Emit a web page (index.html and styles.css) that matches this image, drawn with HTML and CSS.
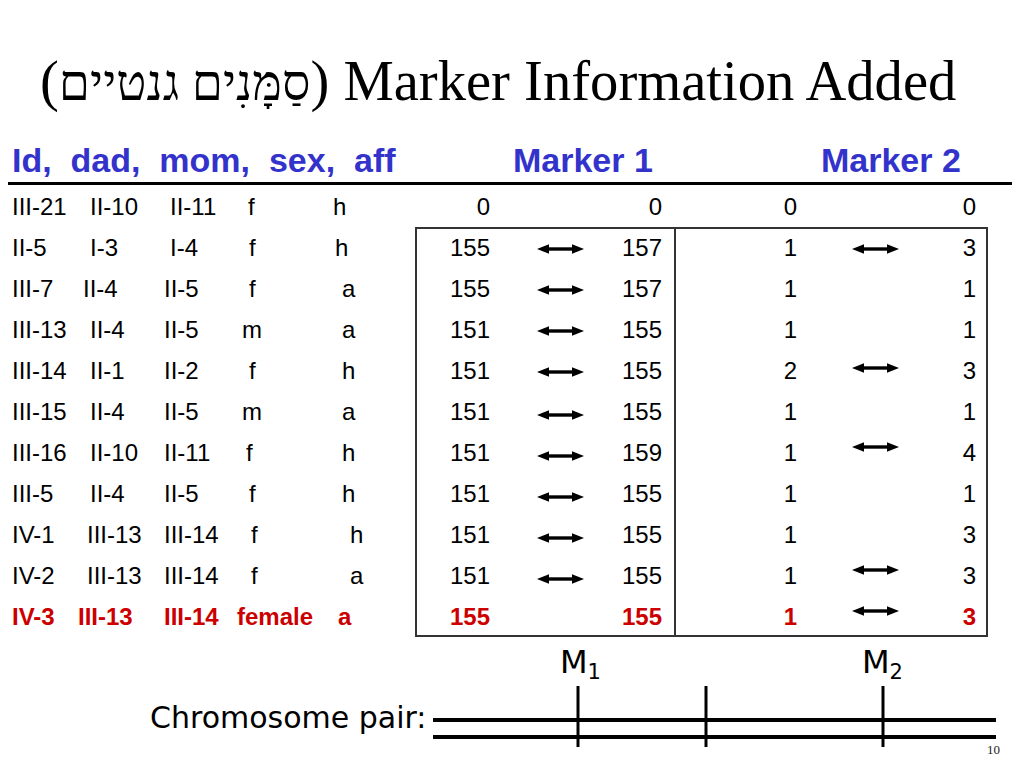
FILE: index.html
```html
<!DOCTYPE html>
<html lang="en">
<head>
<meta charset="utf-8">
<title>Marker Information Added</title>
<link rel="stylesheet" href="styles.css">
</head>
<body>
<div class="slide">
  <h1 class="title">(<span class="he" lang="he">סַמָּנִים גנטיים</span>) Marker Information Added</h1>

  <div class="head">
    <span>Id,  dad,  mom,  sex,  aff</span>
    <span>Marker 1</span>
    <span>Marker 2</span>
  </div>
  <div class="rule"></div>

  <div class="table">
    <div class="row">
      <div class="ids"><span>III-21</span><span>II-10</span><span class="nudge-r6">II-11</span><span class="nudge-l1">f</span><span class="nudge-l9">h</span></div>
      <div class="m1"><span class="n1">0</span><span class="n2">0</span></div>
      <div class="m2"><span class="n1">0</span><span class="n2">0</span></div>
    </div>

    <div class="row boxed top">
      <div class="ids"><span>II-5</span><span>I-3</span><span class="nudge-r6">I-4</span><span>f</span><span class="nudge-l7">h</span></div>
      <div class="m1"><span class="n1">155</span><svg class="arrow" viewBox="0 0 47 12"><use href="#dbl"/></svg><span class="n2">157</span></div>
      <div class="m2"><span class="n1">1</span><svg class="arrow" viewBox="0 0 47 12"><use href="#dbl"/></svg><span class="n2">3</span></div>
    </div>

    <div class="row boxed">
      <div class="ids"><span>III-7</span><span class="nudge-l7">II-4</span><span>II-5</span><span>f</span><span>a</span></div>
      <div class="m1"><span class="n1">155</span><svg class="arrow" viewBox="0 0 47 12"><use href="#dbl"/></svg><span class="n2">157</span></div>
      <div class="m2"><span class="n1">1</span><span class="n2">1</span></div>
    </div>

    <div class="row boxed">
      <div class="ids"><span>III-13</span><span>II-4</span><span>II-5</span><span class="nudge-l7">m</span><span>a</span></div>
      <div class="m1"><span class="n1">151</span><svg class="arrow" viewBox="0 0 47 12"><use href="#dbl"/></svg><span class="n2">155</span></div>
      <div class="m2"><span class="n1">1</span><span class="n2">1</span></div>
    </div>

    <div class="row boxed">
      <div class="ids"><span>III-14</span><span>II-1</span><span>II-2</span><span>f</span><span>h</span></div>
      <div class="m1"><span class="n1">151</span><svg class="arrow" viewBox="0 0 47 12"><use href="#dbl"/></svg><span class="n2">155</span></div>
      <div class="m2"><span class="n1">2</span><svg class="arrow up-s" viewBox="0 0 47 12"><use href="#dbl"/></svg><span class="n2">3</span></div>
    </div>

    <div class="row boxed">
      <div class="ids"><span>III-15</span><span>II-4</span><span>II-5</span><span class="nudge-l7">m</span><span>a</span></div>
      <div class="m1"><span class="n1">151</span><svg class="arrow down" viewBox="0 0 47 12"><use href="#dbl"/></svg><span class="n2">155</span></div>
      <div class="m2"><span class="n1">1</span><span class="n2">1</span></div>
    </div>

    <div class="row boxed">
      <div class="ids"><span>III-16</span><span>II-10</span><span>II-11</span><span class="nudge-l3">f</span><span>h</span></div>
      <div class="m1"><span class="n1">151</span><svg class="arrow down" viewBox="0 0 47 12"><use href="#dbl"/></svg><span class="n2">159</span></div>
      <div class="m2"><span class="n1">1</span><svg class="arrow up" viewBox="0 0 47 12"><use href="#dbl"/></svg><span class="n2">4</span></div>
    </div>

    <div class="row boxed">
      <div class="ids"><span>III-5</span><span>II-4</span><span>II-5</span><span>f</span><span>h</span></div>
      <div class="m1"><span class="n1">151</span><svg class="arrow down" viewBox="0 0 47 12"><use href="#dbl"/></svg><span class="n2">155</span></div>
      <div class="m2"><span class="n1">1</span><span class="n2">1</span></div>
    </div>

    <div class="row boxed">
      <div class="ids"><span>IV-1</span><span class="nudge-l3">III-13</span><span>III-14</span><span class="nudge-r2">f</span><span class="nudge-r8">h</span></div>
      <div class="m1"><span class="n1">151</span><svg class="arrow down" viewBox="0 0 47 12"><use href="#dbl"/></svg><span class="n2">155</span></div>
      <div class="m2"><span class="n1">1</span><span class="n2">3</span></div>
    </div>

    <div class="row boxed">
      <div class="ids"><span>IV-2</span><span class="nudge-l3">III-13</span><span>III-14</span><span class="nudge-r2">f</span><span class="nudge-r8">a</span></div>
      <div class="m1"><span class="n1">151</span><svg class="arrow down" viewBox="0 0 47 12"><use href="#dbl"/></svg><span class="n2">155</span></div>
      <div class="m2"><span class="n1">1</span><svg class="arrow up" viewBox="0 0 47 12"><use href="#dbl"/></svg><span class="n2">3</span></div>
    </div>

    <div class="row boxed bottom hl">
      <div class="ids"><span>IV-3</span><span class="nudge-l12">III-13</span><span>III-14</span><span class="nudge-l12">female</span><span class="nudge-l4">a</span></div>
      <div class="m1"><span class="n1">155</span><span class="n2">155</span></div>
      <div class="m2"><span class="n1">1</span><svg class="arrow up" viewBox="0 0 47 12"><use href="#dbl"/></svg><span class="n2">3</span></div>
    </div>
  </div>

  <div class="mlabels">
    <span class="mlabel">M<sub>1</sub></span>
    <span class="mlabel">M<sub>2</sub></span>
  </div>

  <div class="chromo">
    <span class="cp-text">Chromosome pair:</span>
    <svg class="cp-lines" viewBox="0 0 563 62" width="563" height="62">
      <line x1="0" y1="34" x2="563" y2="34" stroke="#000" stroke-width="4"/>
      <line x1="0" y1="51" x2="563" y2="51" stroke="#000" stroke-width="4"/>
      <line x1="145" y1="0" x2="145" y2="61" stroke="#000" stroke-width="3"/>
      <line x1="273" y1="0" x2="273" y2="61" stroke="#000" stroke-width="3"/>
      <line x1="450" y1="0" x2="450" y2="61" stroke="#000" stroke-width="3"/>
    </svg>
  </div>
  <div class="pagenum">10</div>

  <svg class="defs" width="0" height="0" aria-hidden="true">
    <defs>
      <g id="dbl">
        <line x1="9" y1="6" x2="38" y2="6" stroke="#000" stroke-width="3.4"/>
        <polygon points="0,6 12,1.3 12,10.7" fill="#000"/>
        <polygon points="47,6 35,1.3 35,10.7" fill="#000"/>
      </g>
    </defs>
  </svg>
</div>
</body>
</html>
```

FILE: styles.css
```css
* {
  box-sizing: border-box;
  margin: 0;
  padding: 0;
}

html, body {
  width: 1024px;
  height: 768px;
  background: #ffffff;
  overflow: hidden;
}

body {
  font-family: "Liberation Sans", Arial, sans-serif;
  color: #000000;
}

.slide {
  width: 1024px;
  height: 768px;
  padding-top: 51px;
  overflow: hidden;
}

.title {
  font-family: "Liberation Serif", "DejaVu Serif", serif;
  font-weight: normal;
  font-size: 56.6px;
  line-height: 60px;
  height: 60px;
  padding-left: 40px;
  white-space: nowrap;
}

.title .he {
  font-size: 50px;
  line-height: 1;
}

.head {
  display: grid;
  grid-template-columns: 501px 308px 1fr;
  margin-top: 29px;
  padding-left: 12px;
  height: 40px;
  line-height: 40px;
  font-size: 34px;
  font-weight: bold;
  color: #3333cc;
  white-space: pre;
}

.rule {
  height: 3px;
  background: #000000;
  margin: 2px 12px 1px 8px;
}

.table {
  margin-left: 8px;
  font-size: 24px;
}

.row {
  display: grid;
  grid-template-columns: 407px 259px 314px;
  height: 41px;
}

.ids {
  display: grid;
  grid-template-columns: 78px 74px 85px 93px 1fr;
  align-items: center;
  padding-left: 4px;
  white-space: nowrap;
}

.m1,
.m2 {
  display: grid;
  align-items: center;
  white-space: nowrap;
}

.m1 {
  grid-template-columns: 75px 47px 47px 1fr;
  padding-right: 12px;
}

.m2 {
  grid-template-columns: 123px 55px 47px 1fr;
  padding-right: 12px;
}

.n1 {
  grid-column: 1;
  grid-row: 1;
  text-align: right;
}

.arrow {
  grid-column: 3;
  grid-row: 1;
  width: 47px;
  height: 12px;
  display: block;
  margin-top: 2px;
}

.arrow.down {
  margin-top: 6px;
}

.arrow.up {
  margin-top: -12px;
}

.arrow.up-s {
  margin-top: -5px;
}

.n2 {
  grid-column: 4;
  grid-row: 1;
  text-align: right;
}

/* the boxed marker block */
.boxed .m1 {
  box-shadow: inset 2px 0 0 #333333;
}

.boxed .m2 {
  box-shadow: inset 2px 0 0 #333333, inset -2px 0 0 #333333;
}

.boxed.top .m1 {
  box-shadow: inset 2px 0 0 #333333, inset 0 2px 0 #333333;
}

.boxed.top .m2 {
  box-shadow: inset 2px 0 0 #333333, inset -2px 0 0 #333333, inset 0 2px 0 #333333;
}

.boxed.bottom .m1 {
  box-shadow: inset 2px 0 0 #333333, inset 0 -2px 0 #333333;
}

.boxed.bottom .m2 {
  box-shadow: inset 2px 0 0 #333333, inset -2px 0 0 #333333, inset 0 -2px 0 #333333;
}

.hl {
  color: #cc0000;
  font-weight: bold;
}

.nudge-l1 { margin-left: -1px; }
.nudge-l3 { margin-left: -3px; }
.nudge-l4 { margin-left: -4px; }
.nudge-l7 { margin-left: -7px; }
.nudge-l9 { margin-left: -9px; }
.nudge-l12 { margin-left: -12px; }
.nudge-r2 { margin-left: 2px; }
.nudge-r6 { margin-left: 6px; }
.nudge-r8 { margin-left: 8px; }

/* bottom diagram */
.mlabels {
  display: flex;
  height: 49px;
  padding-top: 5px;
  padding-left: 560px;
  font-family: "DejaVu Sans", sans-serif;
  font-size: 32px;
  line-height: 40px;
}

.mlabel {
  flex: none;
  width: 302px;
}

.mlabel:last-child {
  width: auto;
}

.mlabel sub {
  font-size: 21px;
  vertical-align: -6px;
  line-height: 0;
}

.chromo {
  display: flex;
  height: 62px;
  padding-left: 150px;
}

.cp-text {
  flex: none;
  width: 283px;
  margin-top: 14px;
  font-family: "DejaVu Sans", sans-serif;
  font-size: 30px;
  line-height: 36px;
  white-space: nowrap;
}

.cp-lines {
  flex: none;
  display: block;
}

.pagenum {
  margin-top: -5px;
  padding-right: 24px;
  text-align: right;
  font-family: "Liberation Serif", serif;
  font-size: 13px;
  line-height: 14px;
  color: #222222;
}

.defs {
  position: absolute;
  width: 0;
  height: 0;
  overflow: hidden;
}
```
